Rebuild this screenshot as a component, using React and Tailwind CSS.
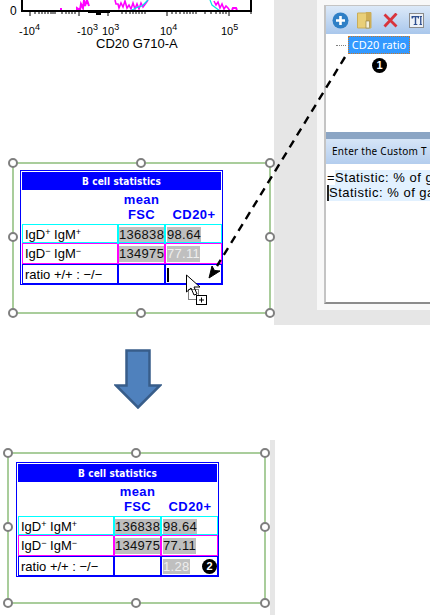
const cellBase = "flex items-center h-full text-[13px] text-black";
const rowGrid = "grid grid-cols-[96px_47px_58px] -mr-px";

function Handle({ className }) {
  return <span className={"absolute w-[10px] h-[10px] rounded-full bg-white border-2 border-[#7f7f7f] " + className} />;
}

function Value({ children, dim, tall }) {
  return (
    <span className={"bg-[#bfbfbf] tracking-[0.3px] whitespace-nowrap flex items-center " + (tall ? "h-[16px] " : "h-[15px] ") + (dim ? "text-[#eeeeee]" : "text-[#111111]")}>
      {children}
    </span>
  );
}

function Sup({ children }) {
  return <span className="text-[9px] relative top-[-2px]">{children}</span>;
}

function StatsTable({ final }) {
  return (
    <div className="w-[203px] h-[115px] border border-[#0000ff] p-px font-['Liberation_Sans',sans-serif]">
      <div className="h-[18px] bg-[#0000ff] text-white text-[10px] font-bold flex items-center justify-center font-['DejaVu_Sans_Condensed','DejaVu_Sans',sans-serif] tracking-[0.1px]">
        B cell statistics
      </div>
      <div className="grid grid-cols-[96px_47px_58px] h-[34px] text-[#0000ff] font-bold text-[13px] leading-[15px] tracking-[0.4px]">
        <div />
        <div className="text-center pt-[2px]">mean<br />FSC</div>
        <div className="text-center pt-[17px]">CD20+</div>
      </div>
      <div className={rowGrid + " h-[19px] border border-[#00ffff]"}>
        <div className={cellBase + " border-r-2 border-[#00ffff] pl-[2px]"}>IgD<Sup>+</Sup>&nbsp;IgM<Sup>+</Sup></div>
        <div className={cellBase + " border-r-2 border-[#00ffff]"}><Value>136838</Value></div>
        <div className={cellBase + " pl-[1px]"}><Value>98.64</Value></div>
      </div>
      <div className={rowGrid + " h-[21px] border border-[#ff00ff]"}>
        <div className={cellBase + " border-r-2 border-[#ff00ff] pl-[2px]"}>IgD<Sup>−</Sup>&nbsp;IgM<Sup>−</Sup></div>
        <div className={cellBase + " border-r-2 border-[#ff00ff]"}><Value tall>134975</Value></div>
        <div className={cellBase + " pl-[1px]"}><Value tall dim={!final}>77.11</Value></div>
      </div>
      <div className={rowGrid + " h-[20px] border border-[#0000ff]"}>
        <div className={cellBase + " border-r-2 border-[#0000ff] pl-[2px]"}>ratio +/+ : −/−</div>
        <div className={cellBase + " border-r-2 border-[#0000ff]"} />
        <div className={cellBase + " pl-[1px]"}>
          {final ? <Value dim>1.28</Value> : <span className="w-[2px] h-[14px] bg-black" />}
        </div>
      </div>
    </div>
  );
}

function Frame({ className, pad, children }) {
  return (
    <div className={"relative z-10 shrink-0 w-[259px] h-[152px] border-2 border-[#a9cd9b] " + pad + " " + className}>
      <Handle className="-left-[6px] -top-[6px]" />
      <Handle className="left-[122px] -top-[6px]" />
      <Handle className="-right-[6px] -top-[6px]" />
      <Handle className="-left-[6px] top-[68px]" />
      <Handle className="-right-[6px] top-[68px]" />
      <Handle className="-left-[6px] -bottom-[6px]" />
      <Handle className="left-[122px] -bottom-[6px]" />
      <Handle className="-right-[6px] -bottom-[6px]" />
      {children}
    </div>
  );
}

function Badge({ n, className }) {
  return (
    <span className={"absolute z-20 w-[15px] h-[15px] rounded-full bg-black text-white text-[11px] font-bold flex items-center justify-center font-['Liberation_Sans',sans-serif] " + className}>
      {n}
    </span>
  );
}

function Axis() {
  const minorTicks = [35,39,42,45,48,51,53,55, 62,66,69,72,75, 122,126,130,133,136,139,142,145, 172,176,180,184,187,190,193,196, 205,211,216,220,223,226,251];
  const majorTicks = [30, 79, 108, 167, 229];
  return (
    <svg className="block" width="270" height="20">
      <polyline fill="none" stroke="#ff00ff" strokeWidth="2" points="61,11 61,8" />
      <polyline fill="none" stroke="#ff00ff" strokeWidth="2" points="77,11 77,8 80,10 81,4 83,8 84,0 85,6 87,0 89,6" />
      <polyline fill="none" stroke="#ff00ff" strokeWidth="1.6" points="115,0 116,4 118,4 119,8 121,3 123,7 125,1 127,8 129,5 131,9 133,3 135,9 137,4 139,9 141,3 143,7 146,3 148,0" />
      <polyline fill="none" stroke="#00e5e5" strokeWidth="1.2" points="130,11 134,9 138,7 142,6 146,2 148,0" />
      <polyline fill="none" stroke="#00e5e5" strokeWidth="1.2" points="210,0 212,5 216,8 220,11" />
      <polyline fill="none" stroke="#ff00ff" strokeWidth="1.6" points="214,1 216,5 218,2 220,8 222,4 224,9 226,6 228,8 230,11" />
      <polyline fill="none" stroke="#ff00ff" strokeWidth="2" points="232,10 233,8 236,8 237,10" />
      <path d="M22 0V11H251V0" fill="none" stroke="black" strokeWidth="2" />
      {majorTicks.map((x) => <line key={x} x1={x} x2={x} y1="11" y2="16" stroke="black" />)}
      {minorTicks.map((x) => <line key={x} x1={x} x2={x} y1="11" y2="14" stroke="black" />)}
      <rect x="88" y="11" width="22" height="2" fill="black" />
      <rect x="96" y="12" width="5" height="3" fill="black" />
      <text x="10" y="15" fontSize="12" fontFamily="Liberation Sans">0</text>
    </svg>
  );
}

function Tick({ base, exp }) {
  return (
    <span className="whitespace-nowrap">
      {base}
      <span className="text-[9px] relative -top-[5px]">{exp}</span>
    </span>
  );
}

function Cursor() {
  return (
    <svg className="absolute z-20 left-[184px] top-[272px]" width="26" height="34">
      <path d="M2.5 3V20L7 16L10 23L13 22L10 15L16 15Z" fill="white" stroke="black" />
      <rect x="4.5" y="17.5" width="10" height="10" fill="none" stroke="black" strokeDasharray="1 1" />
      <rect x="12.5" y="23.5" width="10" height="9" fill="white" stroke="black" />
      <path d="M15 28H20M17.5 25.5V30.5" stroke="black" />
    </svg>
  );
}

function Dialog() {
  return (
    <div className="w-[156px] h-[325px] ml-[4px] bg-[#e6e6e6] shrink-0">
      <div className="ml-[43px] h-[310px] bg-[#f8f8f8] pl-[7px] pb-[6px] pt-[5px]">
        <div className="h-full flex flex-col bg-white border-t border-l-2 border-[#c4c4c4] border-b-2 border-b-[#8c8c8c]">
          <div className="h-[28px] shrink-0 bg-gradient-to-b from-[#dce9f8] to-[#a9c7ec] flex items-center gap-[11px] pl-[6px]">
            <svg width="17" height="17" viewBox="0 0 17 17">
              <circle cx="8.5" cy="8.5" r="8" fill="#2f7fc6" />
              <path d="M8.5 4V13M4 8.5H13" stroke="white" strokeWidth="2.6" />
            </svg>
            <svg className="-ml-[3px]" width="15" height="17" viewBox="0 0 15 17">
              <path d="M0.5 1H9L9 0.5H14V16H0.5Z" fill="#e9cf78" stroke="#c9ad5a" />
              <path d="M9 1V12L14 16V1Z" fill="#cfae55" />
              <rect x="9" y="9" width="3.5" height="7" fill="#f5f0d8" stroke="#8a7a3f" strokeWidth="0.6" />
            </svg>
            <svg width="15" height="15" viewBox="0 0 15 15">
              <path d="M1.5 1.5L13.5 13.5M13.5 0.5L1.5 13.5" stroke="#d8343d" strokeWidth="2.8" />
            </svg>
            <svg width="15" height="15" viewBox="0 0 15 15">
              <rect x="0.5" y="0.5" width="14" height="14" fill="#eef2f7" stroke="#8b8b8b" />
              <path d="M2.5 3H10V5.5H9L8.5 4.3H7.2V11H8.3V12H4.7V11H5.8V4.3H4.4L4 5.5H2.5Z" fill="#2f4f8f" />
              <path d="M10.5 3H13V4H12.4V11H13V12H10.5V11H11.1V4H10.5Z" fill="#2f4f8f" />
            </svg>
          </div>
          <div className="h-[98px] shrink-0 pt-[2px] pl-[10px] flex items-start">
            <span className="w-[10px] mt-[9px] border-t border-dotted border-[#808080]" />
            <span className="h-[18px] w-[62px] ml-[2px] bg-[#3399ff] text-white text-[11px] leading-[16px] border border-dotted border-[#c8782a] text-center font-['Noto_Sans',sans-serif] whitespace-nowrap">
              CD20 ratio
            </span>
          </div>
          <div className="h-[7px] shrink-0 bg-[#8ba5c4]" />
          <div className="h-[25px] shrink-0 bg-gradient-to-b from-[#d6e5f7] to-[#b3cdee] flex items-center pl-[6px] text-[10px] text-black whitespace-nowrap overflow-hidden font-['Noto_Sans',sans-serif] tracking-[0.26px]">
            Enter the Custom T
          </div>
          <div className="flex-1 pt-[6px] pl-[1px] text-[13px] leading-[15px] whitespace-nowrap overflow-hidden text-black tracking-[0.5px]">
            <div>=<span className="bg-[#e2f1ff]">Statistic: % of g</span></div>
            <div className="flex items-stretch">
              <span className="w-[2px] h-[16px] bg-[#222222] shrink-0" />
              <span className="bg-[#e2f1ff]">Statistic: % of gat</span>
            </div>
          </div>
        </div>
      </div>
    </div>
  );
}

export default function App() {
  return (
    <div className="relative flex w-[430px] h-[615px] bg-white overflow-hidden font-['Liberation_Sans',sans-serif]">
      <div className="w-[270px] shrink-0 flex flex-col">
        <div className="h-[50px] shrink-0">
          <Axis />
          <div className="grid grid-cols-[58px_25px_58px_61px_auto] pl-[19px] mt-[6px] text-[11px] leading-[11px] h-[11px] text-black">
            <Tick base="-10" exp="4" />
            <Tick base="-10" exp="3" />
            <Tick base="10" exp="3" />
            <Tick base="10" exp="4" />
            <Tick base="10" exp="5" />
          </div>
          <div className="pl-[96px] text-[13px] leading-[13px]">CD20 G710-A</div>
        </div>

        <Frame className="ml-[12px] mt-[112px]" pad="pl-[6px] pt-[6px]">
          <StatsTable />
        </Frame>

        <svg className="block ml-[114px] mt-[35px] shrink-0" width="48" height="60">
          <path d="M12.5 1.5H35.5V36.5H46L24 58.5L2 36.5H12.5Z" fill="#4f81bd" stroke="#385d8a" strokeWidth="2.5" />
        </svg>

        <Frame className="ml-[7px] mt-[43px]" pad="pl-[7px] pt-[8px]">
          <StatsTable final />
        </Frame>
      </div>

      <div className="w-[160px] shrink-0 flex flex-col">
        <Dialog />
        <div className="w-[5px] h-[175px] mt-[115px] bg-[#e6e6e6]" />
      </div>

      <svg className="absolute z-20 left-0 top-0 pointer-events-none" width="430" height="325">
        <line x1="345" y1="57" x2="217" y2="266" stroke="black" strokeWidth="2.4" strokeDasharray="8 6" />
        <path d="M209 278L212 266L214.5 270.5L220 271Z" fill="black" stroke="black" />
      </svg>

      <Badge n="1" className="left-[372px] top-[58px]" />
      <Badge n="2" className="left-[202px] top-[559px]" />
      <Cursor />
    </div>
  );
}
